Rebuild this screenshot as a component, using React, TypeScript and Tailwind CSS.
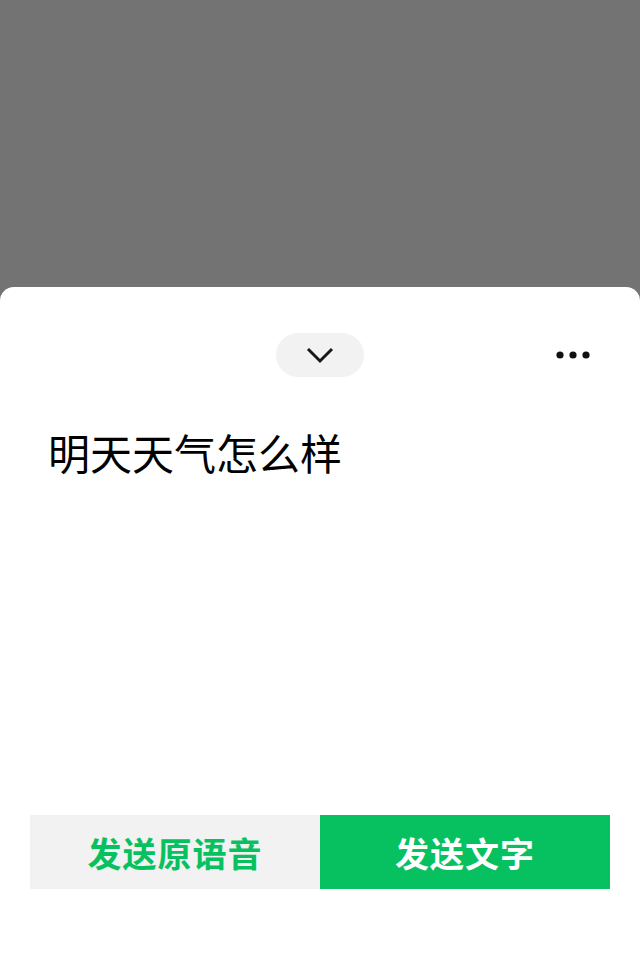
export default function App() {
  return (
    <div
      className="flex h-[965px] w-full flex-col bg-[#737373]"
      style={{ fontFamily: '"Noto Sans CJK SC", "Noto Sans", sans-serif' }}
    >
      <div className="h-[287px] shrink-0" />
      <div className="flex flex-1 flex-col rounded-t-[14px] bg-white">
        {/* header */}
        <div className="mt-[46px] grid h-[44px] grid-cols-3 items-center">
          <div />
          <div className="flex justify-center">
            <button className="flex h-[44px] w-[88px] items-center justify-center rounded-full bg-[#f2f2f2]">
              <svg width="28" height="18" viewBox="0 0 28 18" fill="none" stroke="#191919" strokeWidth="3" strokeLinejoin="miter">
                <path d="M2 3l12 12 12-12" />
              </svg>
            </button>
          </div>
          <div className="flex justify-end pr-[50px]">
            <svg width="34" height="8" viewBox="0 0 34 8" fill="#111">
              <circle cx="4" cy="4" r="3.6" />
              <circle cx="17" cy="4" r="3.6" />
              <circle cx="30" cy="4" r="3.6" />
            </svg>
          </div>
        </div>

        {/* recognized text */}
        <p className="mt-[50px] px-[48px] text-[42px] leading-[50px] text-black">明天天气怎么样</p>

        {/* actions */}
        <div className="mx-[30px] mb-[76px] mt-auto grid h-[74px] grid-cols-2">
          <button className="flex items-center justify-center bg-[#f2f2f2] text-[34px] font-semibold tracking-[1px] text-[#07c160]">
            发送原语音
          </button>
          <button className="flex items-center justify-center bg-[#07c160] text-[34px] font-semibold tracking-[1px] text-white">
            发送文字
          </button>
        </div>
      </div>
    </div>
  );
}
